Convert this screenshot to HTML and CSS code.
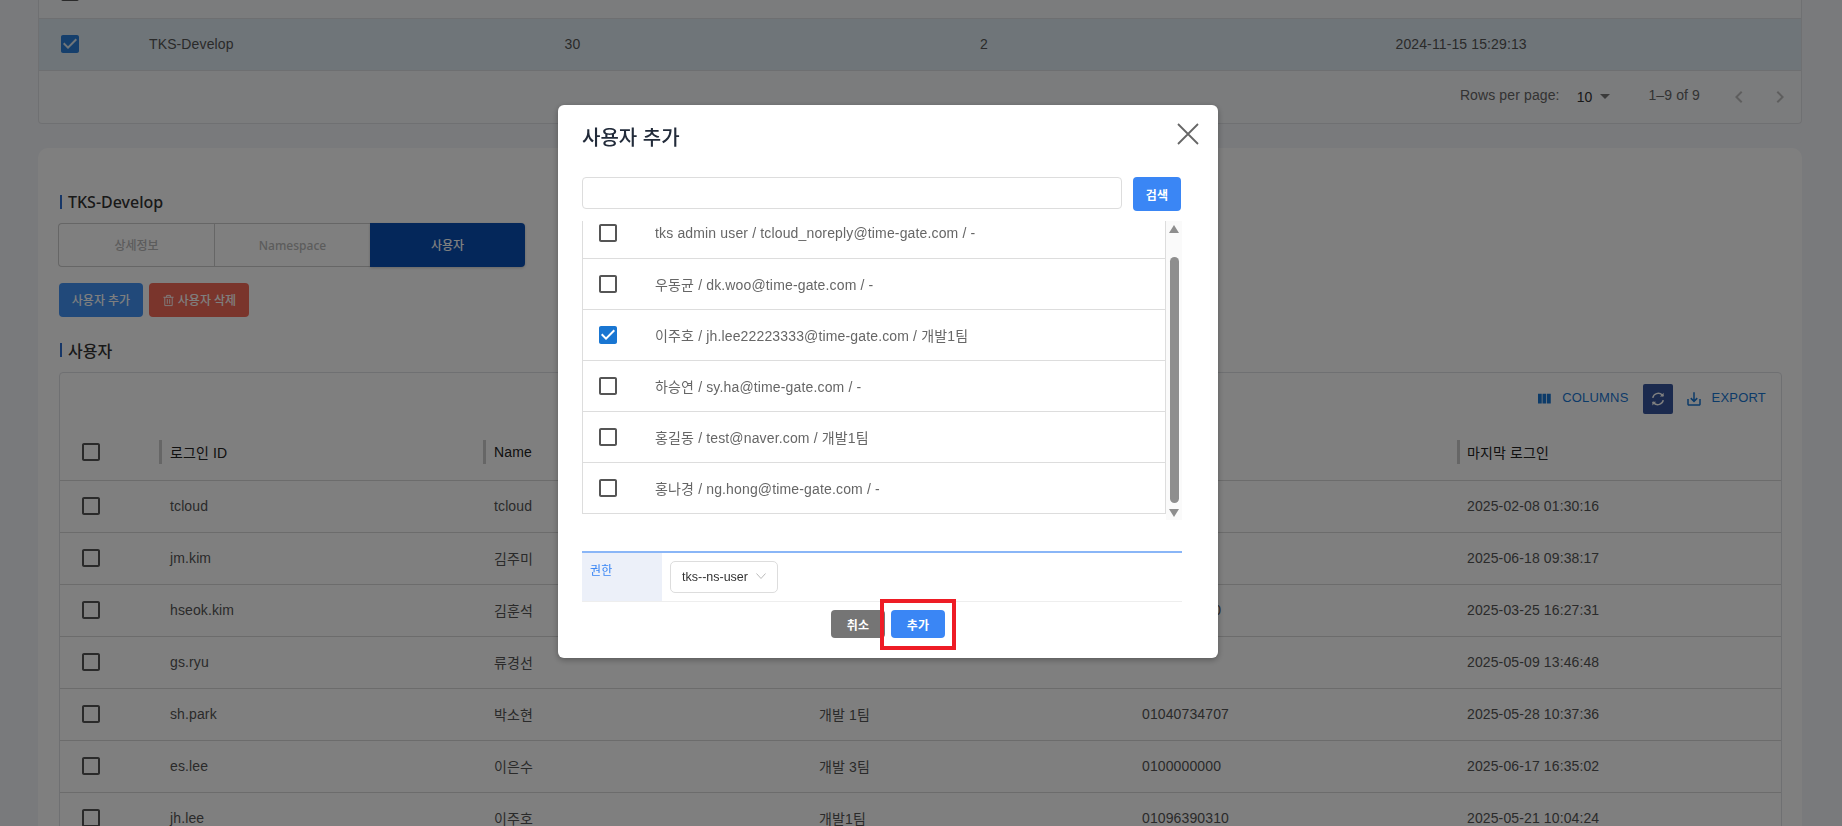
FILE: index.html
```html
<!DOCTYPE html>
<html lang="ko">
<head>
    <meta charset="UTF-8">
    <title>사용자 추가</title>
    <link rel="stylesheet" href="styles.css">
</head>
<body>

<svg class="defs" width="0" height="0">
    <symbol id="cbOff" viewBox="0 0 24 24"><path d="M19 5v14H5V5h14m0-2H5c-1.1 0-2 .9-2 2v14c0 1.1.9 2 2 2h14c1.1 0 2-.9 2-2V5c0-1.1-.9-2-2-2z"/></symbol>
    <symbol id="cbOn" viewBox="0 0 24 24"><path d="M19 3H5c-1.11 0-2 .9-2 2v14c0 1.1.89 2 2 2h14c1.11 0 2-.89 2-2V5c0-1.11-.89-2-2-2zm-9 14l-5-5 1.41-1.41L10 14.17l7.59-7.59L19 8l-9 9z"/></symbol>
</svg>

<div id="page">
    <!-- 상단 목록 -->
    <div class="card-top">
        <table class="tbl tbl-top">
            <colgroup><col class="t1"><col class="t2"><col class="t3"><col class="t4"><col></colgroup>
            <tr class="row-cut"><td><svg class="cb"><use href="#cbOff"/></svg></td><td></td><td></td><td></td><td></td></tr>
            <tr class="row-sel">
                <td><svg class="cb cb-blue"><use href="#cbOn"/></svg></td>
                <td>TKS-Develop</td><td>30</td><td>2</td><td>2024-11-15 15:29:13</td>
            </tr>
        </table>
        <div class="pager">
            <span class="pager-label">Rows per page:</span>
            <span class="pager-size">10</span><i class="caret"></i>
            <span class="pager-count">1–9 of 9</span>
            <svg class="pager-arrow" viewBox="0 0 24 24"><path d="M15.41 7.41L14 6l-6 6 6 6 1.41-1.41L10.83 12z"/></svg>
            <svg class="pager-arrow" viewBox="0 0 24 24"><path d="M10 6L8.59 7.41 13.17 12l-4.58 4.59L10 18l6-6z"/></svg>
        </div>
    </div>

    <!-- 상세 -->
    <div class="card-detail">
        <h3 class="sec-title">TKS-Develop</h3>
        <div class="tabs">
            <a href="javascript:;">상세정보</a>
            <a href="javascript:;">Namespace</a>
            <a href="javascript:;" class="cur">사용자</a>
        </div>
        <div class="actions">
            <a href="javascript:;" class="btn btn-blue">사용자 추가</a>
            <a href="javascript:;" class="btn btn-red">
                <svg class="ico-trash" viewBox="0 0 14 14" fill="none" stroke="currentColor" stroke-width="1"><path d="M1.5 3.5h11M5 3.5V1.5h4v2M3 3.5v9h8v-9M5.7 5.5v5M8.3 5.5v5"/></svg>
                사용자 삭제
            </a>
        </div>
        <h3 class="sec-title sec-title2">사용자</h3>

        <div class="grid-box">
            <div class="toolbar">
                <svg class="ico-tool" viewBox="0 0 24 24"><path d="M10 18h5V5h-5v13zm-6 0h5V5H4v13zM16 5v13h5V5h-5z"/></svg>
                <span class="tool-text">COLUMNS</span>
                <a href="javascript:;" class="btn-refresh">
                    <svg viewBox="0 0 24 24" fill="none" stroke="#fff" stroke-width="2"><path d="M5 10.5A7.5 7.5 0 0 1 17.5 6.5L19 8M19 13.5A7.5 7.5 0 0 1 6.5 17.5L5 16"/><path d="M19.5 3.5v5h-5zM4.500 20.500v-5h5z" stroke="none" fill="#fff"/></svg>
                </a>
                <svg class="ico-tool ico-export" viewBox="0 0 24 24"><path d="M19 12v7H5v-7H3v7c0 1.100.9 2 2 2h14c1.100 0 2-.9 2-2v-7h-2zm-6 .67l2.590-2.580L17 11.500l-5 5-5-5 1.410-1.410L11 12.670V3h2z"/></svg>
                <span class="tool-text">EXPORT</span>
            </div>
            <table class="tbl tbl-user">
                <colgroup><col class="u1"><col class="u2"><col class="u3"><col class="u4"><col class="u5"><col></colgroup>
                <tr class="head">
                    <td><svg class="cb"><use href="#cbOff"/></svg></td>
                    <td>로그인 ID</td><td>Name</td><td></td><td></td><td class="last">마지막 로그인</td>
                </tr>
                <tr><td><svg class="cb"><use href="#cbOff"/></svg></td><td>tcloud</td><td>tcloud</td><td></td><td></td><td>2025-02-08 01:30:16</td></tr>
                <tr><td><svg class="cb"><use href="#cbOff"/></svg></td><td>jm.kim</td><td>김주미</td><td></td><td></td><td>2025-06-18 09:38:17</td></tr>
                <tr><td><svg class="cb"><use href="#cbOff"/></svg></td><td>hseok.kim</td><td>김훈석</td><td></td><td>0100000000</td><td>2025-03-25 16:27:31</td></tr>
                <tr><td><svg class="cb"><use href="#cbOff"/></svg></td><td>gs.ryu</td><td>류경선</td><td></td><td></td><td>2025-05-09 13:46:48</td></tr>
                <tr><td><svg class="cb"><use href="#cbOff"/></svg></td><td>sh.park</td><td>박소현</td><td>개발 1팀</td><td>01040734707</td><td>2025-05-28 10:37:36</td></tr>
                <tr><td><svg class="cb"><use href="#cbOff"/></svg></td><td>es.lee</td><td>이은수</td><td>개발 3팀</td><td>0100000000</td><td>2025-06-17 16:35:02</td></tr>
                <tr><td><svg class="cb"><use href="#cbOff"/></svg></td><td>jh.lee</td><td>이주호</td><td>개발1팀</td><td>01096390310</td><td>2025-05-21 10:04:24</td></tr>
            </table>
        </div>
    </div>
</div>

<!-- 사용자 추가 팝업 -->
<div class="overlay">
    <div class="modal">
        <div class="modal-head">
            <h2>사용자 추가</h2>
            <svg class="modal-close" viewBox="0 0 22 22" fill="none" stroke="#666" stroke-width="1.8"><path d="M1 1l20 20M21 1L1 21"/></svg>
        </div>
        <div class="search">
            <input type="text">
            <a href="javascript:;" class="btn-search">검색</a>
        </div>
        <div class="pick">
            <div class="pick-list">
                <ul>
                    <li><svg class="cb"><use href="#cbOff"/></svg><span>tks admin user / tcloud_noreply@time-gate.com / -</span></li>
                    <li><svg class="cb"><use href="#cbOff"/></svg><span>우동균 / dk.woo@time-gate.com / -</span></li>
                    <li><svg class="cb cb-on"><use href="#cbOn"/></svg><span>이주호 / jh.lee22223333@time-gate.com / 개발1팀</span></li>
                    <li><svg class="cb"><use href="#cbOff"/></svg><span>하승연 / sy.ha@time-gate.com / -</span></li>
                    <li><svg class="cb"><use href="#cbOff"/></svg><span>홍길동 / test@naver.com / 개발1팀</span></li>
                    <li><svg class="cb"><use href="#cbOff"/></svg><span>홍나경 / ng.hong@time-gate.com / -</span></li>
                </ul>
            </div>
            <div class="scroll">
                <i class="arr-up"></i>
                <div class="thumb"></div>
                <i class="arr-down"></i>
            </div>
        </div>
        <div class="perm">
            <div class="perm-label">권한</div>
            <div class="perm-value">
                <div class="select">
                    <span>tks--ns-user</span>
                    <svg viewBox="0 0 10 6" fill="none" stroke="#bbb" stroke-width="1"><path d="M.5.5L5 5.500 9.500.5"/></svg>
                </div>
            </div>
        </div>
        <div class="modal-foot">
            <a href="javascript:;" class="btn-foot btn-cancel">취소</a>
            <a href="javascript:;" class="btn-foot btn-add">추가<b class="mark"></b></a>
        </div>
    </div>
</div>

</body>
</html>
```

FILE: styles.css
```css
*{
    margin: 0;
    padding: 0;
    box-sizing: border-box;
}
a{
    text-decoration: none;
}
ul{
    list-style: none;
}
html,body{
    height: 100%;
    overflow: hidden;
}
body{
    background-color: #f3f5f9;
    font-family: "Liberation Sans", "Noto Sans CJK KR", sans-serif;
    font-size: 14px;
    letter-spacing: .12px;
    color: #555;
}
.defs{
    position: absolute;
}
#page{
    padding: 0 40px 0 38px;
    margin-top: -34px;
}
.tbl{
    width: 100%;
    border-collapse: collapse;
    table-layout: fixed;
}
.tbl td{
    padding: 0 10px;
    white-space: nowrap;
}
.cb{
    display: block;
    width: 24px;
    height: 24px;
    fill: #555;
}
.cb-blue{
    fill: #2a7fd8;
}
.cb-on{
    fill: #1976d2;
}

/* 상단 목록 */
.card-top{
    border: 1px solid #dfe1e5;
    border-top: 0;
    border-radius: 0 0 4px 4px;
    background-color: #f7f8fa;
    height: 158px;
}
.tbl-top .t1{
    width: 100px;
}
.tbl-top .t2,.tbl-top .t3,.tbl-top .t4{
    width: 415.500px;
}
.tbl-top td:first-child{
    padding-left: 19px;
}
.tbl-top tr{
    height: 52px;
    border-bottom: 1px solid #dcdfe3;
}
.row-sel{
    background-color: #dfebf3;
}
.pager{
    display: flex;
    align-items: center;
    justify-content: flex-end;
    height: 52px;
    padding-right: 9px;
    color: #666;
}
.pager-label,.pager-count{
    margin-top: -4px;
}
.pager-size{
    margin-left: 17px;
    color: #333;
}
.caret{
    width: 0;
    height: 0;
    margin-left: 8px;
    border-left: 5px solid transparent;
    border-right: 5px solid transparent;
    border-top: 5px solid #777;
}
.pager-count{
    margin-left: 38px;
    margin-right: 27px;
}
.pager-arrow{
    width: 24px;
    height: 24px;
    fill: #bdbdbd;
}
.pager-arrow:last-child{
    margin-left: 17px;
}

/* 상세 */
.card-detail{
    height: 900px;
    margin-top: 24px;
    padding: 43px 20px 0 21px;
    background-color: #fff;
    border-radius: 10px 10px 0 0;
}
.sec-title{
    display: flex;
    align-items: center;
    height: 22px;
    font-family: "Noto Sans", "Noto Sans CJK KR", sans-serif;
    font-size: 16px;
    font-weight: 500;
    letter-spacing: 0;
    color: #333;
}
.sec-title:before{
    content: "";
    width: 2px;
    height: 14px;
    margin-left: 1px;
    margin-right: 6px;
    background-color: #2f6fd0;
}
.sec-title2{
    margin-top: 22px;
}
.tabs{
    display: flex;
    width: 467px;
    height: 44px;
    margin-top: 10px;
    margin-left: -1px;
    font-family: "Noto Sans", "Noto Sans CJK KR", sans-serif;
    font-size: 12px;
    font-weight: 500;
    letter-spacing: 0;
}
.tabs a{
    flex: 1;
    display: flex;
    align-items: center;
    justify-content: center;
    color: #b8b8b8;
    border: 1px solid #ccc;
    border-right: 0;
}
.tabs a:first-child{
    border-radius: 4px 0 0 4px;
}
.tabs a.cur{
    color: #fff;
    background-color: #084eb4;
    border: 0;
    border-radius: 0 4px 4px 0;
    box-shadow: 0 1px 3px rgba(0,0,0,0.2);
}
.actions{
    display: flex;
    gap: 6px;
    margin-top: 16px;
}
.btn{
    display: flex;
    align-items: center;
    justify-content: center;
    height: 34px;
    border-radius: 4px;
    color: #fff;
    font-family: "Noto Sans", "Noto Sans CJK KR", sans-serif;
    font-size: 12px;
    font-weight: 500;
    letter-spacing: 0;
}
.btn-blue{
    width: 84px;
    background-color: #4293f5;
}
.btn-red{
    width: 100px;
    gap: 3px;
    background-color: #f56a58;
}
.ico-trash{
    width: 13px;
    height: 13px;
}

/* 사용자 그리드 */
.grid-box{
    margin-top: 11px;
    border: 1px solid #dfe1e5;
    border-radius: 4px;
}
.toolbar{
    display: flex;
    align-items: center;
    justify-content: flex-end;
    height: 52px;
    padding-right: 15px;
    color: #1976d2;
    font-size: 13px;
    letter-spacing: .2px;
}
.ico-tool{
    width: 18px;
    height: 18px;
    fill: #1976d2;
}
.tool-text{
    margin-left: 9px;
    margin-top: -4px;
}
.btn-refresh{
    display: flex;
    align-items: center;
    justify-content: center;
    width: 30px;
    height: 30px;
    margin-left: 14px;
    border-radius: 2px;
    background-color: #36549c;
}
.btn-refresh svg{
    width: 18px;
    height: 18px;
}
.ico-export{
    margin-left: 12px;
}
.tbl-user .u1{
    width: 99px;
}
.tbl-user .u2{
    width: 324px;
}
.tbl-user .u3{
    width: 326px;
}
.tbl-user .u4{
    width: 323px;
}
.tbl-user .u5{
    width: 325px;
}
.tbl-user tr{
    height: 52px;
    border-bottom: 1px solid #d8d8d8;
}
.tbl-user td:first-child{
    padding-left: 19px;
}
.tbl-user td:nth-child(2),.tbl-user td:nth-child(3){
    padding-left: 11px;
}
.tbl-user .head{
    height: 55px;
    color: #222;
}
.tbl-user .head td:not(:first-child){
    background: linear-gradient(#ccc,#ccc) no-repeat 0 50%;
    background-size: 3px 24px;
}

/* 팝업 */
.overlay{
    position: fixed;
    left: 0;
    top: 0;
    right: 0;
    bottom: 0;
    padding: 105px 0 0 558px;
    background-color: rgba(0,0,0,0.5);
}
.modal{
    width: 660px;
    height: 553px;
    padding: 18px 36px 0 24px;
    background-color: #fff;
    border-radius: 6px;
    box-shadow: 0 2px 6px rgba(0,0,0,0.3);
}
.modal-head{
    display: flex;
    align-items: center;
    justify-content: space-between;
    height: 26px;
}
.modal-head h2{
    font-family: "Noto Sans CJK KR", sans-serif;
    font-size: 20px;
    font-weight: 500;
    letter-spacing: 0;
    color: #222b3a;
}
.modal-close{
    width: 22px;
    height: 22px;
    margin-right: -17px;
    margin-top: -5px;
}
.search{
    display: flex;
    gap: 11px;
    margin-top: 28px;
}
.search input{
    width: 540px;
    height: 32px;
    border: 1px solid #ddd;
    border-radius: 4px;
    outline: 0;
}
.btn-search{
    display: flex;
    align-items: center;
    justify-content: center;
    width: 48px;
    height: 34px;
    border-radius: 4px;
    background-color: #3a86f5;
    color: #fff;
    font-size: 12px;
    font-weight: bold;
}
.pick{
    display: flex;
    height: 299px;
    margin-top: 10px;
    overflow: hidden;
}
.pick-list{
    width: 584px;
}
.pick-list ul{
    margin-top: -13px;
    border-left: 1px solid #ddd;
    border-right: 1px solid #ddd;
}
.pick-list li{
    display: flex;
    align-items: center;
    height: 51px;
    padding-left: 13px;
    border-bottom: 1px solid #ddd;
}
.pick-list li span{
    margin-left: 35px;
    letter-spacing: .15px;
    color: #666;
}
.scroll{
    width: 16px;
    background-color: #fafafa;
    display: flex;
    flex-direction: column;
    align-items: center;
    padding-top: 4px;
}
.arr-up,.arr-down{
    width: 0;
    height: 0;
    border-left: 5px solid transparent;
    border-right: 5px solid transparent;
}
.arr-up{
    border-bottom: 8px solid #8e8e8e;
}
.arr-down{
    margin-top: 6px;
    border-top: 8px solid #8e8e8e;
}
.thumb{
    width: 9px;
    height: 246px;
    margin-top: 24px;
    border-radius: 5px;
    background-color: #8e8e8e;
}
.perm{
    display: flex;
    height: 51px;
    margin-top: 31px;
    border-top: 2px solid #8ab6f7;
    border-bottom: 1px solid #eee;
}
.perm-label{
    width: 80px;
    padding: 8px 0 0 8px;
    background-color: #ecf0f9;
    color: #3a86f5;
    font-size: 12px;
}
.perm-value{
    padding: 8px 0 0 8px;
}
.select{
    display: flex;
    align-items: center;
    justify-content: space-between;
    width: 108px;
    height: 32px;
    padding: 0 11px;
    border: 1px solid #ddd;
    border-radius: 5px;
    font-size: 12.500px;
    letter-spacing: 0;
    color: #333;
}
.select svg{
    width: 10px;
    height: 6px;
    margin-top: -3px;
}
.modal-foot{
    display: flex;
    gap: 6px;
    margin-top: 8px;
    padding-left: 249px;
}
.btn-foot{
    position: relative;
    display: flex;
    align-items: center;
    justify-content: center;
    width: 54px;
    height: 28px;
    border-radius: 4px;
    color: #fff;
    font-size: 12px;
    font-weight: bold;
}
.btn-cancel{
    background-color: #757575;
}
.btn-add{
    background-color: #3a86f5;
}
.mark{
    position: absolute;
    left: -11px;
    top: -11px;
    width: 76px;
    height: 51px;
    border: 4px solid #ee1c25;
}
```
